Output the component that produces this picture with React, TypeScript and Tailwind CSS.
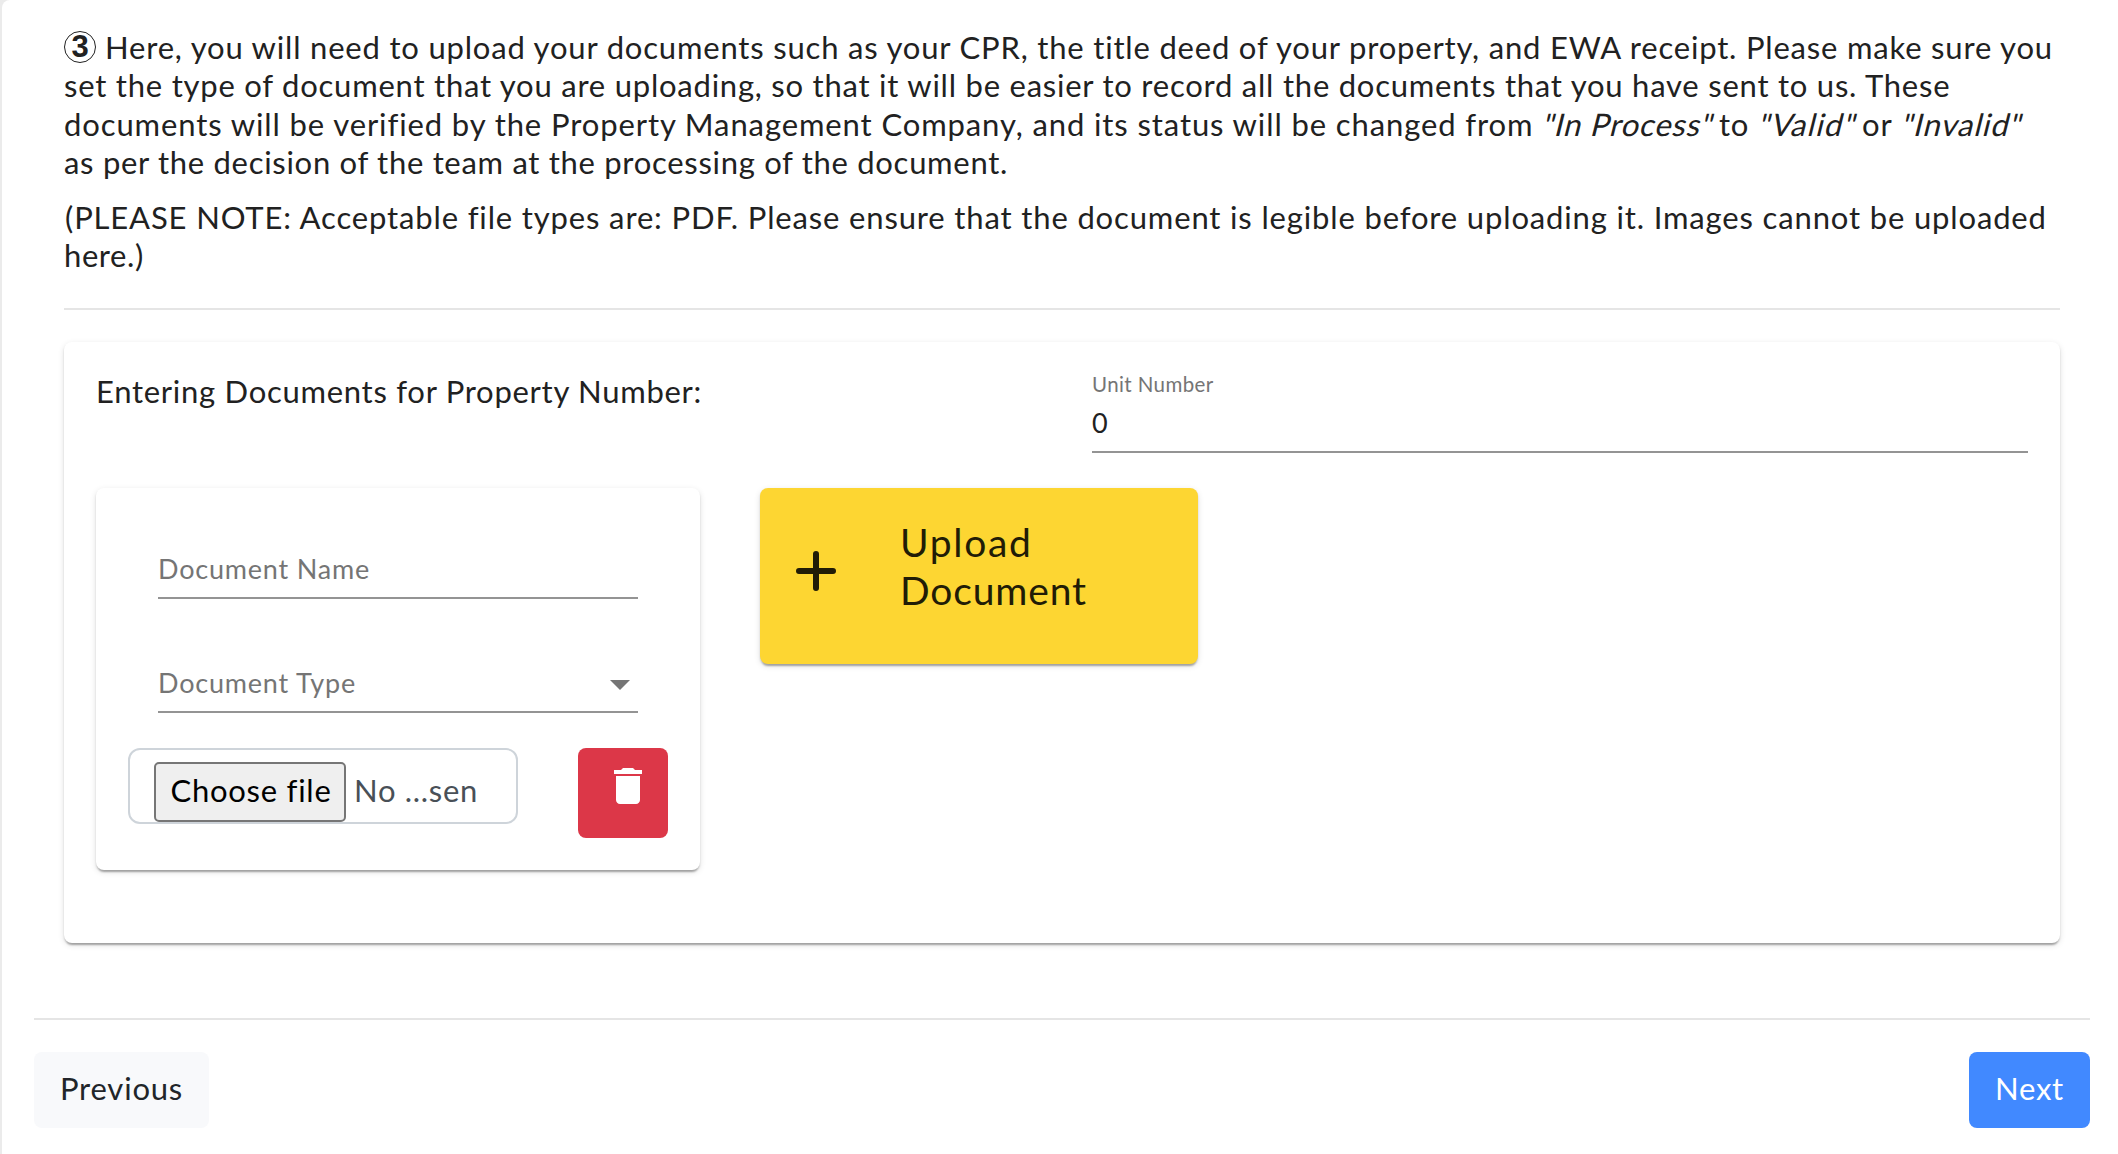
import type { ReactNode } from "react";
import { MdDelete } from "react-icons/md";

const elevation =
  "shadow-[0_4px_2px_-2px_rgba(0,0,0,0.2),0_2px_2px_rgba(0,0,0,0.14),0_2px_6px_rgba(0,0,0,0.12)]";

function Status({ children, className }: { children: ReactNode; className: string }) {
  return (
    <em className={`inline-block origin-[0_31px] -skew-x-[14deg] not-italic ${className}`}>{children}</em>
  );
}

function Instructions() {
  return (
    <div className="whitespace-nowrap text-[31px] leading-[38.4px]">
      <p className="mb-4">
        <span className="flex tracking-[0.813px]">
          <span className="mt-[3px] mr-[9px] flex h-8 w-8 justify-center rounded-full border-[1.5px] border-[#212121] font-['Liberation_Sans',sans-serif] text-[31px] leading-[32px] font-bold tracking-normal">
            <span className="-mt-[1px]">3</span>
          </span>
          Here, you will need to upload your documents such as your CPR, the title deed of your property, and EWA
          receipt. Please make sure you
        </span>
        <span className="block tracking-[0.773px]">
          set the type of document that you are uploading, so that it will be easier to record all the documents that
          you have sent to us. These
        </span>
        <span className="flex">
          <span className="w-[1477px] tracking-[0.895px]">
            documents will be verified by the Property Management Company, and its status will be changed from
          </span>
          <Status className="w-[178px] tracking-[0.8px]">"In Process"</Status>
          <span className="w-[38px] tracking-[0.8px]">to</span>
          <Status className="w-[105px] tracking-[1.2px]">"Valid"</Status>
          <span className="w-[38px] tracking-[0.8px]">or</span>
          <Status className="tracking-[1px]">"Invalid"</Status>
        </span>
        <span className="block tracking-[0.704px]">
          as per the decision of the team at the processing of the document.
        </span>
      </p>
      <p>
        <span className="block pl-px tracking-[0.851px]">
          (PLEASE NOTE: Acceptable file types are: PDF. Please ensure that the document is legible before uploading it.
          Images cannot be uploaded
        </span>
        <span className="block tracking-[0.6px]">here.)</span>
      </p>
    </div>
  );
}

function DocumentCard() {
  return (
    <section className={`flex h-[382px] w-[604px] flex-col rounded-lg bg-white px-8 pt-[60px] ${elevation}`}>
      <label className="mx-[30px] flex h-[51px] items-end border-b-2 border-[#949494] pb-[12px] text-[27px] leading-8 tracking-[0.8px] text-[#757575]">
        Document Name
      </label>
      <div className="mx-[30px] mt-[63px] flex h-[51px] items-end justify-between border-b-2 border-[#949494] pb-[12px] text-[27px] leading-8 tracking-[0.8px] text-[#757575]">
        Document Type
        <svg className="mr-2 mb-[9px] h-[10px] w-5" viewBox="0 0 20 10" fill="currentColor">
          <path d="M0 0h20L10 10z" />
        </svg>
      </div>
      <div className="mt-[35px] flex items-start justify-between">
        <div className="flex h-[76px] w-[390px] items-start overflow-hidden rounded-[12px] border-2 border-[#ced4da] pt-3 pl-6 text-[31px] leading-[38px]">
          <button className="h-[60px] w-[192px] rounded-[5px] border-2 border-[#767676] bg-[#efefef] pb-1 pl-[2px] tracking-[0.75px] text-black">
            Choose file
          </button>
          <span className="ml-2 pt-[9px] tracking-[0.7px] text-[#495057]">No ...sen</span>
        </div>
        <button className="h-[90px] w-[90px] rounded-lg bg-[#dc3748] pt-[14px] pl-[26px] align-top text-white">
          <MdDelete className="mb-7 h-12 w-12" />
        </button>
      </div>
    </section>
  );
}

export default function App() {
  return (
    <div className="h-[1154px] overflow-hidden bg-[#ebebeb] pl-[2px] font-['Lato',sans-serif] text-[#212121]">
      <main className="h-full rounded-tl-lg bg-white pr-7 pl-8">
        <div className="pt-7 pr-[30px] pl-[30px]">
          <div className="h-[280px]">
            <Instructions />
          </div>
          <hr className="border-t-2 border-[#e5e5e5]" />
          <section className={`mt-8 h-[601px] rounded-lg bg-white px-8 pt-[30px] ${elevation}`}>
            <div className="flex h-[116px]">
              <h2 className="w-[996px] text-[31px] leading-[38px] tracking-[0.726px]">
                Entering Documents for Property Number:
              </h2>
              <div className="h-[81px] flex-1 border-b-2 border-[#949494]">
                <div className="text-[20.5px] leading-[25px] tracking-[0.4px] text-[#757575]">Unit Number</div>
                <div className="mt-[10px] text-[27px] leading-8">0</div>
              </div>
            </div>
            <div className="flex items-start gap-[60px]">
              <DocumentCard />
              <button
                className={`flex h-[176px] w-[438px] items-start rounded-lg bg-[#fdd632] pt-[30px] pl-9 text-left text-[39px] leading-[48px] text-[#211c06] ${elevation}`}
              >
                <svg
                  className="mt-[33px] h-10 w-10"
                  viewBox="0 0 40 40"
                  stroke="currentColor"
                  strokeWidth="6"
                  strokeLinecap="round"
                >
                  <path d="M20 3v34M3 20h34" />
                </svg>
                <span className="ml-[64px]">
                  <span className="block tracking-[1.668px]">Upload</span>
                  <span className="block tracking-[0.854px]">Document</span>
                </span>
              </button>
            </div>
          </section>
        </div>
        <hr className="mt-[75px] border-t-2 border-[#e5e5e5]" />
        <div className="flex justify-between pt-8 text-[31px] leading-[38px]">
          <button className="h-[76px] w-[175px] rounded-lg bg-[#f8f9fb] pb-1 tracking-[0.815px] text-[#212529]">
            Previous
          </button>
          <button className="h-[76px] w-[121px] rounded-lg bg-[#4189ff] pb-1 tracking-[0.736px] text-white">
            Next
          </button>
        </div>
      </main>
    </div>
  );
}
